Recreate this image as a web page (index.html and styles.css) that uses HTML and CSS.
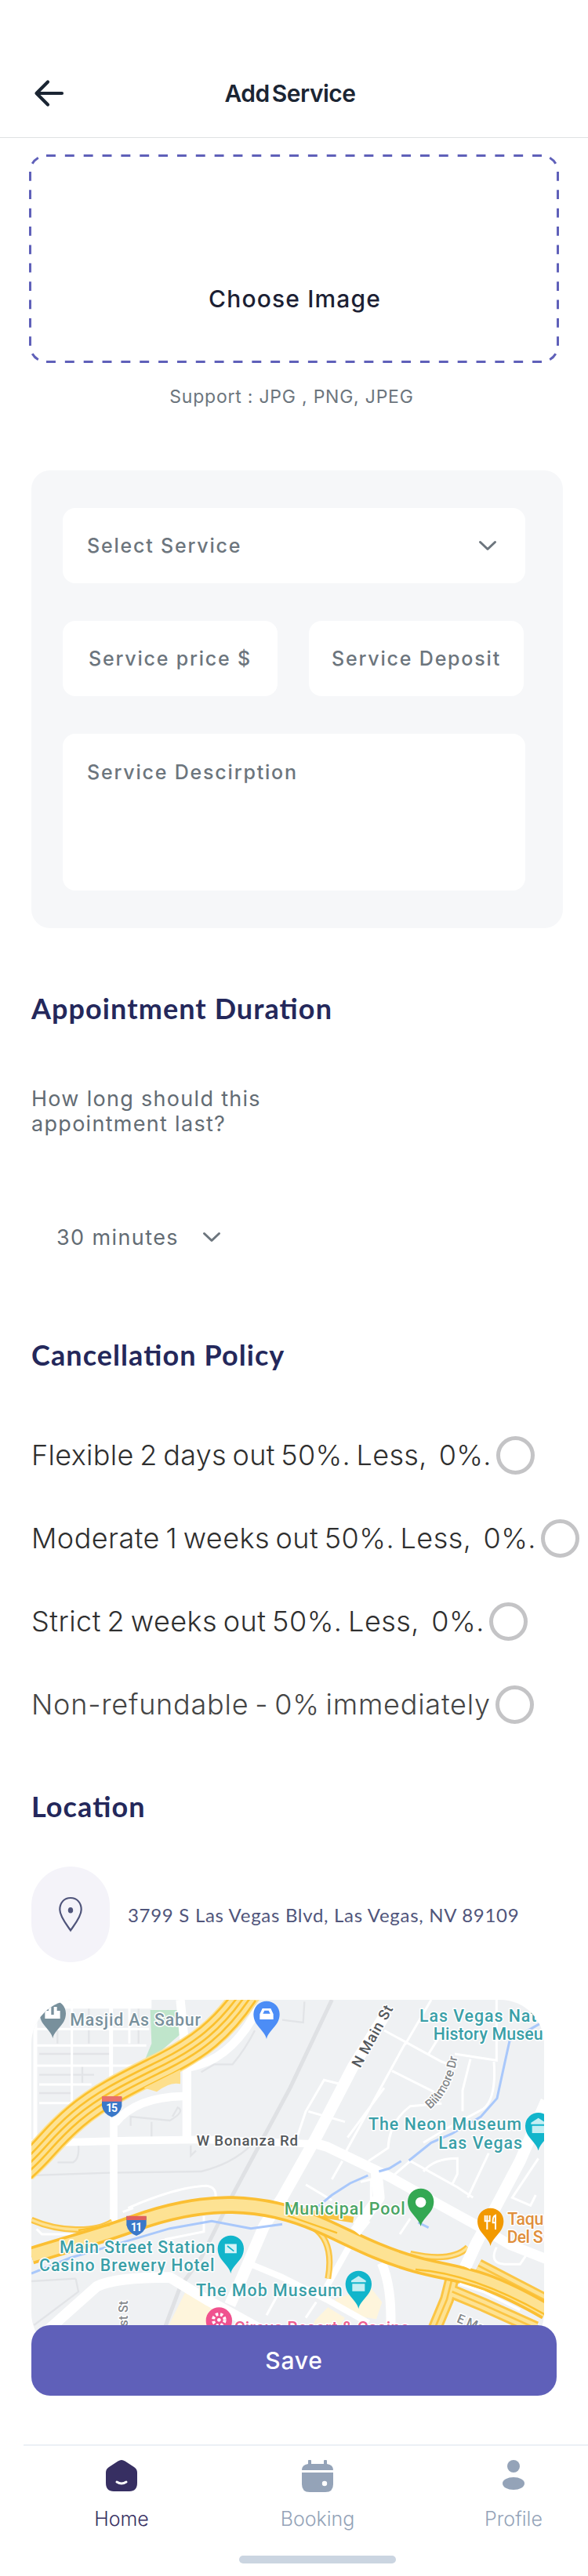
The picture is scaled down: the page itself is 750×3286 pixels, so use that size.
FILE: index.html
```html
<!DOCTYPE html>
<html lang="en">
<head>
<meta charset="utf-8">
<title>Add Service</title>
<link rel="stylesheet" href="styles.css">
</head>
<body>
<header class="header">
  <svg class="back" width="40" height="40" viewBox="0 0 40 40"><path d="M36 20H4M18 5.500L3.500 20L18 34.500" fill="none" stroke="#1b2533" stroke-width="4.200" stroke-linecap="round" stroke-linejoin="round"/></svg>
  <h1 class="title">Add Service</h1>
</header>
<main class="main">
  <div class="upload">
    <svg class="dashes" width="676" height="266" viewBox="0 0 676 266" fill="none" stroke="#5f60b9" stroke-width="3" stroke-dasharray="1 1">
      <path pathLength="53" d="M22 1.500H654"/>
      <path pathLength="53" d="M22 264.500H654"/>
      <path pathLength="19" d="M1.500 22V244"/>
      <path pathLength="19" d="M674.500 22V244"/>
      <path pathLength="3" stroke-dasharray="0 1 1 1" d="M1.500 22A20.500 20.500 0 0 1 22 1.500"/>
      <path pathLength="3" stroke-dasharray="0 1 1 1" d="M654 1.500A20.500 20.500 0 0 1 674.500 22"/>
      <path pathLength="3" stroke-dasharray="0 1 1 1" d="M674.500 244A20.500 20.500 0 0 1 654 264.500"/>
      <path pathLength="3" stroke-dasharray="0 1 1 1" d="M22 264.500A20.500 20.500 0 0 1 1.500 244"/>
    </svg>
    <span class="choose">Choose Image</span>
  </div>
  <p class="support">Support : JPG , PNG, JPEG</p>

  <section class="card">
    <div class="field select"><span>Select Service</span>
      <svg width="24" height="14" viewBox="0 0 24 14"><path d="M2.500 2.500L12 11.500L21.500 2.500" fill="none" stroke="#6c757d" stroke-width="3" stroke-linecap="round" stroke-linejoin="round"/></svg>
    </div>
    <div class="pair">
      <div class="field half">Service price $</div>
      <div class="field half">Service Deposit</div>
    </div>
    <div class="field area">Service Descirption</div>
  </section>

  <h2 class="heading duration">Appointment Duration</h2>
  <p class="question">How long should this<br>appointment last?</p>
  <div class="minutes"><span>30 minutes</span>
    <svg width="24" height="14" viewBox="0 0 24 14"><path d="M2.500 2.500L12 11.500L21.500 2.500" fill="none" stroke="#6c757d" stroke-width="3" stroke-linecap="round" stroke-linejoin="round"/></svg>
  </div>

  <h2 class="heading cancellation">Cancellation Policy</h2>
  <div class="policies">
    <div class="policy flexible"><span>Flexible 2 days out 50%. Less,&nbsp; 0%.</span><i class="radio"></i></div>
    <div class="policy moderate"><span>Moderate 1 weeks out 50%. Less,&nbsp; 0%.</span><i class="radio"></i></div>
    <div class="policy strict"><span>Strict 2 weeks out 50%. Less,&nbsp; 0%.</span><i class="radio"></i></div>
    <div class="policy none"><span>Non-refundable - 0% immediately</span><i class="radio"></i></div>
  </div>

  <h2 class="heading location">Location</h2>
  <div class="address">
    <div class="pill">
      <svg width="32" height="46" viewBox="0 0 32 46"><path d="M16 43.500C12 37.500 2.300 26 2.300 17C2.300 8 8 2 16 2S29.700 8 29.700 17C29.700 26 20 37.500 16 43.500Z" fill="none" stroke="#50557b" stroke-width="2.200"/><ellipse cx="16" cy="17.800" rx="3.200" ry="3.800" fill="#50557b"/></svg>
    </div>
    <span>3799 S Las Vegas Blvd, Las Vegas, NV 89109</span>
  </div>

  <div class="map">
    <svg width="654" height="455" viewBox="30 33 1962 1365">
      <defs>
        <path id="pin" d="M0 95C-8 60-50 45-50 0A50 50 0 0 1 50 0C50 45 8 60 0 95Z"/>
        <path id="i15" d="M860 0C760 150 660 220 540 280S300 395 200 480S90 600 0 680"/>
        <path id="i11" d="M30 1012C180 965 300 935 420 890S680 815 800 818S1020 845 1130 892S1340 1000 1500 1045S1730 1070 2000 1225"/>
        <path id="biltmore" d="M1555 452Q1645 380 1664 230"/>
      </defs>
      <rect x="30" y="33" width="1962" height="1365" fill="#eff1f3"/>
      <path d="M485 72H600V165L530 225L465 262L490 200Z" fill="#bfe5cb"/>
      <path d="M620 1150L722 1210V1300H545ZM1190 1180L1325 1130L1372 1190L1350 1255L1250 1240ZM1115 1260L1165 1210L1230 1250L1200 1300H1100Z" fill="#fef5dc"/>
      <g fill="none" stroke="#e2e4e7" stroke-width="7">
        <path d="M60 240H330M60 320H270M60 390H180M250 60V200M130 60V200M225 285V350M440 60V200M30 705L330 695L680 690Q800 660 870 590M130 655H190Q215 640 210 590M410 515V480L560 495Q620 460 590 445L570 480M490 500V560M640 590V630L660 610M30 1110L200 1100M200 1100L210 1150L40 1278M680 310L730 280H800Q850 220 885 150M990 110L1070 120L1075 40"/>
      </g>
      <path d="M1180 33L1020 370L800 780L680 1020L600 1130L540 1290" fill="none" stroke="#dfe1e4" stroke-width="15"/>
      <g fill="none" stroke="#fff" stroke-width="9">
        <path d="M50 208H470M50 285H460M60 357H260M60 428H185M185 50V430M405 60V200M50 145H480M400 830Q580 750 700 745Q740 750 735 790M50 910L70 930H190M690 860V920L540 950M380 845L420 830"/>
        <path d="M1380 150L1600 270L1660 290M1460 205L1560 33M1460 200L1230 620M1410 305L1570 385M1550 240L1600 160M1650 240L1810 265V33M1710 260L1680 380V460M1800 270Q1810 410 1760 450L1630 520L1530 580M1600 430L1480 440Q1400 500 1395 600L1320 650M1230 360L1150 340L1080 460L1040 580M1090 460L1230 500M1410 710L1480 650L1660 750L1720 790M1530 690Q1570 640 1660 640V700L1640 740M1780 620L1700 790M1970 640L1870 790L1940 820L1960 780M1180 720L1220 650M1080 740L1180 800M1290 730L1330 720L1330 860M1440 930L1480 870M1810 980Q1780 1040 1840 1045H1900L1930 1000M930 1240L990 1130M1080 1250L1120 1190M1380 370L1240 560"/>
      </g>
      <g fill="none" stroke="#fff" stroke-linejoin="round">
        <path d="M140 50H490M600 33L625 290V570" stroke-width="34"/>
        <path d="M45 90V570M335 33V395" stroke-width="15"/>
        <path d="M345 480V890M30 582L400 572L700 568L1120 585" stroke-width="29"/>
        <path d="M350 505Q430 405 610 402M640 290Q800 260 900 60" stroke-width="32"/>
        <path d="M1390 80L1260 290L1120 560L990 790L920 900L830 1110L790 1200" stroke-width="44"/>
        <path d="M1110 580L1160 595L1400 710L1600 822L1760 910L1860 970L2000 1025" stroke-width="38"/>
        <path d="M2000 420L1900 650L1810 820L1730 970L1690 1060M1350 690L1360 790L1280 900" stroke-width="44"/>
        <path d="M90 1300L280 1130Q350 1095 560 1095L700 1180L900 1290" stroke-width="40"/>
        <path d="M870 1045L990 1095L1160 1180L1320 1270M1250 970L1160 1130" stroke-width="24"/>
        <path d="M1370 1040Q1410 1130 1405 1290" stroke-width="36"/>
      </g>
      <g fill="none" stroke="#a9c8fb" stroke-width="9">
        <path d="M1975 125L1860 190L1838 290L1812 410L1750 480L1640 545L1560 580L1475 648M1445 650L1400 678L1360 690M1318 705L1250 735L1180 780L1120 830M30 1080L180 1020L400 955L560 908L720 880L870 908L990 892M1510 885L1550 905"/>
      </g>
      <g fill="none">
        <use href="#i15" stroke="#fde293" stroke-width="108"/>
        <g stroke="#fbc02d" stroke-width="8">
          <use href="#i15" transform="translate(-28 -36)"/><use href="#i15" transform="translate(-13 -17)"/><use href="#i15"/><use href="#i15" transform="translate(13 17)"/><use href="#i15" transform="translate(28 36)"/>
        </g>
        <path d="M460 370Q560 320 600 300V355Q560 345 510 385Z" fill="#fddf8c"/>
        <g stroke="#fbc544" stroke-width="24">
          <path d="M30 875Q110 910 200 912T340 882M960 822L1110 850L1262 875M1110 905Q1190 960 1165 1100M1480 1005Q1640 1040 1700 980"/>
        </g>
        <g stroke="#fde293" stroke-width="10">
          <path d="M30 875Q110 910 200 912T340 882M1110 905Q1190 960 1165 1100M1480 1005Q1640 1040 1700 980"/>
        </g>
        <path d="M1640 1100L1620 1180L1570 1300M1640 1150L1760 1200L1960 1290M1740 1050L2000 1185" stroke="#fbc544" stroke-width="54"/>
        <path d="M1640 1100L1620 1180L1570 1300M1640 1150L1760 1200L1960 1290M1740 1050L2000 1185" stroke="#fde293" stroke-width="36"/>
        <path d="M1640 1100L1620 1180L1570 1300M1640 1150L1760 1200L1960 1290M1740 1050L2000 1185" stroke="#fbc544" stroke-width="8"/>
        <use href="#i11" stroke="#fbbf33" stroke-width="68"/>
        <use href="#i11" stroke="#fde293" stroke-width="46"/>
        <path d="M1500 1065Q1720 1080 2000 1240M210 915L330 895M1000 855L1200 925" stroke="#fbc02d" stroke-width="7"/>
        <path d="M1668 1120L1760 1150L1900 1220" stroke="#fff" stroke-width="10"/>
        <path d="M1740 950L1690 1055M1310 870L1270 920" stroke="#fff" stroke-width="44"/>
      </g>
      <g class="shields">
        <path d="M300 405H376V440Q370 470 338 482Q306 470 300 440Z" fill="#3a78c9"/><path d="M300 402H376V422H300Z" fill="#e8716b"/><text x="316" y="462" font-size="42" textLength="44">15</text>
        <path d="M394 862H470V895Q464 924 432 936Q400 924 394 895Z" fill="#3a78c9"/><path d="M394 860H470V876H394Z" fill="#e0605e"/><text x="410" y="917" font-size="42" textLength="44">11</text>
      </g>
      <g class="labels">
        <g class="grey"><text x="178" y="132" textLength="500">Masjid As Sabur</text></g>
        <g class="teal">
          <text x="138" y="1001" textLength="595">Main Street Station</text>
          <text x="60" y="1072" textLength="670">Casino Brewery Hotel</text>
          <text x="660" y="1168" textLength="560">The Mob Museum</text>
          <text x="1515" y="118" textLength="448">Las Vegas Nat</text>
          <text x="1568" y="186" textLength="420">History Museu</text>
          <text x="1320" y="530" textLength="585">The Neon Museum</text>
          <text x="1588" y="602" textLength="320">Las Vegas</text>
        </g>
        <g class="green"><text x="998" y="856" textLength="462">Municipal Pool</text></g>
        <g class="orange"><text x="1852" y="893" textLength="138">Taqu</text><text x="1850" y="963" textLength="138">Del S</text></g>
        <g class="pink"><text x="806" y="1312" textLength="672">Circus Resort &amp; Casino</text></g>
        <g class="road">
          <text x="662" y="590" textLength="388">W Bonanza Rd</text>
          <text transform="translate(1288 296) rotate(-61)" textLength="262">N Main St</text>
        </g>
        <g class="street">
          <text><textPath href="#biltmore" textLength="232">Biltmore Dr</textPath></text>
          <text transform="translate(398 1310) rotate(-90)">1st St</text>
          <text transform="translate(1655 1265) rotate(22)">E Mesquite</text>
        </g>
      </g>
      <g>
        <use href="#pin" x="112" y="85" fill="#78909c"/><path d="M82 105V75H96V60H106V90H116V60H128V75H140V105Z" fill="#fff"/>
        <use href="#pin" x="930" y="88" fill="#4c8df6"/><path d="M904 108V88L914 66H946L956 88V108ZM916 86H944L938 74H922Z" fill="#fff"/>
        <use href="#pin" x="793" y="985" fill="#12b5cb"/><path d="M768 965H818V1005H768ZM780 975L805 995" fill="#d5f3f7" stroke="#12b5cb" stroke-width="5"/>
        <use href="#pin" x="1282" y="1120" fill="#12b5cb"/><path d="M1254 1108L1282 1090L1310 1108V1114H1254ZM1258 1120H1306V1148H1258Z" fill="#c4eef3"/>
        <use href="#pin" x="1970" y="515" fill="#12b5cb"/><path d="M1942 503L1970 485L1998 503V509H1942ZM1946 515H1994V543H1946Z" fill="#c4eef3"/>
        <use href="#pin" x="1520" y="805" fill="#34a853"/><circle cx="1520" cy="808" r="20" fill="#fff"/>
        <use href="#pin" x="1787" y="880" fill="#f29900"/><path d="M1766 858V880H1774V912M1784 858V880H1774M1774 858V880M1806 912V858Q1794 862 1796 886H1806" fill="none" stroke="#fff" stroke-width="6"/>
        <use href="#pin" x="748" y="1260" fill="#f0528f"/><circle cx="748" cy="1258" r="22" fill="none" stroke="#fff" stroke-width="12" stroke-dasharray="10 8"/><circle cx="748" cy="1258" r="7" fill="#fff"/>
      </g>
    </svg>
  </div>
  <button class="save">Save</button>
</main>
<nav class="nav">
  <div class="tabs">
    <div class="tab active">
      <svg width="40" height="40" viewBox="0 0 40 40"><path d="M15.500 1.600Q20-1.500 24.500 1.600L36 9Q40 11.500 40 16V29Q40 40 30 40H10Q0 40 0 29V16Q0 11.500 4 9Z" fill="#372f62"/><path d="M14 28Q20 32 26 28" fill="none" stroke="#fff" stroke-width="3" stroke-linecap="round"/></svg>
      <span>Home</span>
    </div>
    <div class="tab">
      <svg width="40" height="41" viewBox="0 0 40 41"><path d="M8 5V1.500A1.700 1.700 0 0 1 12 1.500V5H28V1.500A1.700 1.700 0 0 1 32 1.500V5Q40 6 40 13H0Q0 6 8 5ZM0 16H40V31Q40 41 30 41H10Q0 41 0 31Z" fill="#94a3b8"/><circle cx="29" cy="30" r="3.200" fill="#fff"/></svg>
      <span>Booking</span>
    </div>
    <div class="tab">
      <svg width="40" height="40" viewBox="0 0 40 40"><circle cx="20" cy="8" r="8" fill="#94a3b8"/><ellipse cx="20" cy="30" rx="14" ry="8" fill="#94a3b8"/></svg>
      <span>Profile</span>
    </div>
  </div>
  <div class="indicator"></div>
</nav>
</body>
</html>
```
FILE: styles.css
```css
* { box-sizing: border-box; }
body {
  margin: 0;
  width: 750px;
  height: 3286px;
  overflow: hidden;
  background: #fff;
  font-family: Inter, "Liberation Sans", sans-serif;
}
h1, h2, p { margin: 0; }
svg { display: block; flex: none; }

.header {
  display: grid;
  grid-template-columns: 40px 1fr 40px;
  align-items: center;
  height: 176px;
  padding: 62px 53px 0 43px;
  border-bottom: 1px solid #dfe1e3;
}
.title {
  text-align: center;
  font-size: 30px;
  font-weight: 600;
  line-height: 36px;
  letter-spacing: -0.5px;
  word-spacing: -4px;
  color: #1b2533;
}

.main { padding-left: 40px; }

.upload {
  display: grid;
  place-items: center;
  width: 676px;
  height: 266px;
  margin: 21px 0 0 -3px;
}
.dashes, .choose { grid-area: 1 / 1; }
.choose {
  margin: 102px 0 0 2px;
  font-size: 30px;
  font-weight: 500;
  line-height: 36px;
  letter-spacing: 1.15px;
  color: #1c1f34;
}
.support {
  width: 664px;
  margin-top: 28px;
  text-align: center;
  font-size: 23px;
  line-height: 30px;
  letter-spacing: 0.77px;
  color: #6c757d;
}

.card {
  display: flex;
  flex-direction: column;
  gap: 48px;
  width: 678px;
  height: 584px;
  margin-top: 79px;
  padding: 48px 40px;
  border-radius: 24px;
  background: #f6f7f9;
}
.field {
  display: flex;
  align-items: center;
  width: 590px;
  height: 96px;
  border-radius: 16px;
  background: #fff;
  font-size: 25px;
  font-weight: 500;
  line-height: 30px;
  letter-spacing: 1.8px;
  color: #6c757d;
}
.select { justify-content: space-between; padding: 0 36px 0 31px; }
.pair { display: flex; gap: 40px; }
.half { width: 274px; justify-content: center; }
.area { height: 200px; align-items: flex-start; padding: 34px 31px; }

.heading {
  font-family: Lato, "Liberation Sans", sans-serif;
  font-size: 36px;
  font-weight: 700;
  line-height: 44px;
  letter-spacing: 1.08px;
  font-feature-settings: "liga" 1;
  color: #24285b;
}
.duration { margin-top: 80px; }
.cancellation { margin-top: 108px; }
.location { margin-top: 83px; }

.question {
  margin-top: 78px;
  font-size: 27px;
  font-weight: 400;
  line-height: 32px;
  letter-spacing: 1.3px;
  color: #636c74;
}
.minutes {
  display: flex;
  align-items: center;
  gap: 30px;
  height: 40px;
  margin-top: 108px;
  padding-left: 32px;
  font-size: 27px;
  font-weight: 400;
  letter-spacing: 1.4px;
  color: #636c74;
}

.policies { display: grid; gap: 56px; margin-top: 81px; }
.policy {
  display: flex;
  align-items: center;
  gap: 6px;
  height: 50px;
  font-size: 36px;
  font-weight: 300;
  line-height: 44px;
  word-spacing: -3px;
  color: #2f2f2f;
  white-space: nowrap;
}
.flexible { letter-spacing: 0.34px; }
.moderate { letter-spacing: 0.45px; }
.strict { letter-spacing: 0.48px; }
.none { letter-spacing: 0.77px; color: #454545; }
.radio {
  flex: none;
  width: 49px;
  height: 49px;
  border: 5px solid #c4c4c6;
  border-radius: 50%;
}

.address {
  display: flex;
  align-items: center;
  gap: 23px;
  margin-top: 55px;
  font-family: Lato, "Liberation Sans", sans-serif;
  font-size: 24px;
  letter-spacing: 0.7px;
  color: #50557b;
}
.pill {
  display: grid;
  place-items: center;
  width: 100px;
  height: 122px;
  border-radius: 50px;
  background: #f4f3f9;
}

.map {
  width: 654px;
  height: 455px;
  margin-top: 48px;
  overflow: hidden;
  border-radius: 56px;
}
.labels { font: 500 64px Roboto, sans-serif; paint-order: stroke; stroke: #fff; stroke-width: 9px; stroke-linejoin: round; }
.grey { fill: #78909c; }
.teal { fill: #3a9fa8; }
.green { fill: #4aa564; }
.orange { fill: #e08f3c; }
.pink { fill: #ee5f90; }
.road { fill: #54585c; font-size: 56px; }
.street { fill: #85888b; font-size: 48px; }
.shields { fill: #fff; font-family: Roboto, sans-serif; font-weight: 700; }

.save {
  position: relative;
  display: block;
  width: 670px;
  height: 90px;
  margin-top: -40px;
  padding: 0;
  border: 0;
  border-radius: 24px;
  background: #5f60b9;
  color: #fff;
  font: 500 30px/36px Inter, "Liberation Sans", sans-serif;
  letter-spacing: 0.8px;
}

.nav {
  width: 750px;
  height: 168px;
  margin: 62px 0 0 30px;
  border-top: 2px solid #ebf0f5;
}
.tabs { display: flex; height: 110px; padding-top: 18px; }
.tab {
  display: grid;
  grid-template-rows: 60px 30px;
  justify-items: center;
  width: 250px;
  font-size: 25px;
  font-weight: 300;
  line-height: 30px;
  color: #94a3b8;
}
.active { color: #372f62; }
.indicator {
  width: 200px;
  height: 10px;
  margin: 30px auto 0;
  border-radius: 5px;
  background: #cbd5e1;
}
```
